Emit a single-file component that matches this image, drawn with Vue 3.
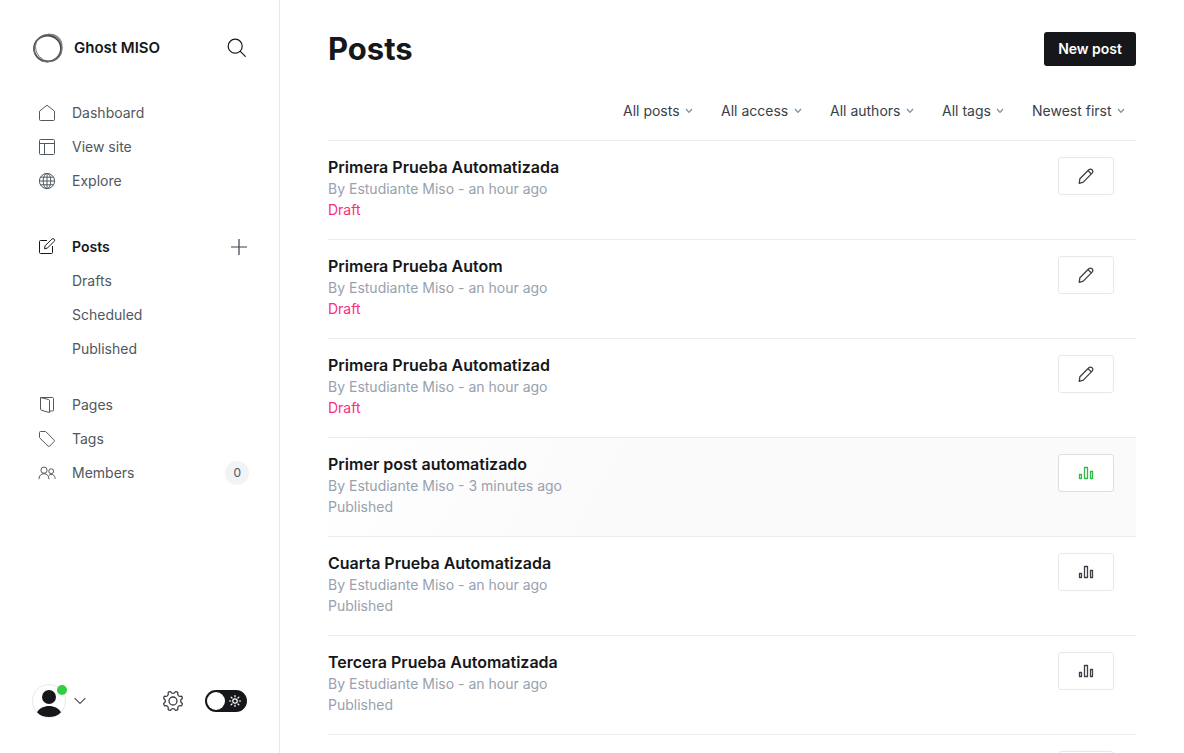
<script setup>
import { ref } from 'vue'

const mainLinks = [
  { label: 'Dashboard', icon: 'home' },
  { label: 'View site', icon: 'layout' },
  { label: 'Explore', icon: 'globe' },
]
const postLinks = ['Drafts', 'Scheduled', 'Published']
const contentLinks = [
  { label: 'Pages', icon: 'pages' },
  { label: 'Tags', icon: 'tag' },
  { label: 'Members', icon: 'members', count: 0 },
]
const filters = [
  { name: 'Type', value: 'All posts' },
  { name: 'Access', value: 'All access' },
  { name: 'Author', value: 'All authors' },
  { name: 'Tag', value: 'All tags' },
  { name: 'Order', value: 'Newest first' },
]
const posts = [
  { id: 1, title: 'Primera Prueba Automatizada', time: 'an hour ago', status: 'Draft' },
  { id: 2, title: 'Primera Prueba Autom', time: 'an hour ago', status: 'Draft' },
  { id: 3, title: 'Primera Prueba Automatizad', time: 'an hour ago', status: 'Draft' },
  { id: 4, title: 'Primer post automatizado', time: '3 minutes ago', status: 'Published', active: true },
  { id: 5, title: 'Cuarta Prueba Automatizada', time: 'an hour ago', status: 'Published' },
  { id: 6, title: 'Tercera Prueba Automatizada', time: 'an hour ago', status: 'Published' },
  { id: 7 },
]
const night = ref(false)

// Eight rounded teeth around a 22 x 22 box.
const point = (r, deg) => {
  const a = (deg * Math.PI) / 180
  return `${(11 + r * Math.cos(a)).toFixed(2)} ${(11 + r * Math.sin(a)).toFixed(2)}`
}
let gear = `M${point(9.6, 15.5)}`
for (let i = 0; i < 8; i++) {
  const a = 22.5 + i * 45
  gear += `Q${point(10.3, a)} ${point(9.6, a + 8)}`
  gear += `C${point(7.2, a + 12)} ${point(7.2, a + 33)} ${point(9.6, a + 37)}`
}
gear += 'Z'
</script>

<template>
  <div class="app">
    <aside class="sidebar">
      <header class="brand">
        <svg class="logo" viewBox="0 0 32 32" fill="none" aria-hidden="true">
          <path d="M12 3.500C19-.500 28 3 30 10C32.500 18 28 27 20 29.500C27 25 30 18 27.500 11.500C25 5 18 2.500 12 3.500Z" fill="#a8a8a8" />
          <ellipse cx="15.500" cy="16.500" rx="13.500" ry="13" stroke="#444" stroke-width="1.800" />
          <ellipse cx="16.500" cy="15.500" rx="14" ry="12.700" stroke="#666" stroke-width=".8" transform="rotate(48 16 16)" />
          <ellipse cx="16" cy="16" rx="14.700" ry="13.200" stroke="#777" stroke-width=".8" transform="rotate(-45 16 16)" />
        </svg>
        <strong>Ghost MISO</strong>
        <button class="icon-button search" type="button" aria-label="Search">
          <svg width="20" height="20" viewBox="0 0 20 20" fill="none" stroke="#15171a" stroke-width="1.200" stroke-linecap="round"><circle cx="8.200" cy="8.200" r="7" /><path d="m13.300 13.300 5 5" /></svg>
        </button>
      </header>

      <nav class="nav">
        <ul>
          <li v-for="link in mainLinks" :key="link.label">
            <a href="#">
              <svg class="nav-icon" viewBox="0 0 18 18" aria-hidden="true">
                <path v-if="link.icon === 'home'" d="M1.500 7.200 9 1.200l7.500 6V15.500a1 1 0 0 1-1 1h-13a1 1 0 0 1-1-1Z" />
                <path v-else-if="link.icon === 'layout'" d="M2.500 1.500h13a1 1 0 0 1 1 1v13a1 1 0 0 1-1 1h-13a1 1 0 0 1-1-1v-13a1 1 0 0 1 1-1ZM1.500 5.500h15M6.500 5.500v11" />
                <g v-else><circle cx="9" cy="9" r="7.600" /><ellipse cx="9" cy="9" rx="3.800" ry="7.600" /><path d="M9 1.400v15.200M1.400 9h15.200M2.500 5.200h13M2.500 12.800h13" /></g>
              </svg>
              {{ link.label }}
            </a>
          </li>
        </ul>
        <ul class="posts-nav">
          <li class="current">
            <a href="#" aria-current="page">
              <svg class="nav-icon" viewBox="0 0 18 18" aria-hidden="true">
                <path d="M9 2.500H2.500a1 1 0 0 0-1 1v11a1 1 0 0 0 1 1h11a1 1 0 0 0 1-1V8M6.500 10.800l.6-3 6.700-6.700a1.500 1.500 0 0 1 2.300 2.300L9.400 10.100Z" />
              </svg>
              Posts
            </a>
            <button class="icon-button add" type="button" aria-label="New post">
              <svg width="18" height="18" viewBox="0 0 18 18" fill="none" stroke="#394047" stroke-width="1.200"><path d="M9 1v16M1 9h16" /></svg>
            </button>
          </li>
          <li v-for="label in postLinks" :key="label"><a class="sub" href="#">{{ label }}</a></li>
        </ul>
        <ul>
          <li v-for="link in contentLinks" :key="link.label">
            <a href="#">
              <svg class="nav-icon" viewBox="0 0 18 18" aria-hidden="true">
                <path v-if="link.icon === 'pages'" d="M2.500 1.500h12a1 1 0 0 1 1 1v11.500a1 1 0 0 1-1 1h-3M2.500 1.500l8 2a1.300 1.300 0 0 1 1 1.200v11.800l-8-2.200a1.300 1.300 0 0 1-1-1.200Z" />
                <path v-else-if="link.icon === 'tag'" d="M2.500 1.500h4.600a1.500 1.500 0 0 1 1.100.5l7.800 7.900a1.200 1.200 0 0 1 0 1.700l-4.300 4.500a1.200 1.200 0 0 1-1.700 0L2 8.200A1.500 1.500 0 0 1 1.500 7V2.500a1 1 0 0 1 1-1Z" />
                <g v-else><circle cx="6" cy="6.200" r="3.100" /><circle cx="13.200" cy="7.200" r="2.400" /><path d="M.9 15.200c0-3.300 2.100-5.500 5.100-5.500s5 2.200 5 5.500M11 11.300c2.800-2 6.100-.4 6.100 3.500" /></g>
              </svg>
              {{ link.label }}
              <span v-if="link.count !== undefined" class="count">{{ link.count }}</span>
            </a>
          </li>
        </ul>
      </nav>

      <footer class="account">
        <button class="user" type="button" aria-label="Account menu">
          <span class="avatar">
            <svg width="34" height="34" viewBox="0 0 34 34" aria-hidden="true">
              <circle cx="17" cy="17" r="16.500" fill="#fff" stroke="#e6e9eb" />
              <circle cx="17" cy="13" r="7" fill="#15171a" />
              <path d="M5 28.200c2.500-4 7-6.200 12-6.200s9.500 2.200 12 6.200C26 31.500 21.500 33 17 33S8 31.500 5 28.200Z" fill="#15171a" />
            </svg>
            <span class="status-dot"></span>
          </span>
          <svg width="12" height="8" viewBox="0 0 12 8" fill="none" stroke="#505860" stroke-width="1.100" stroke-linecap="round"><path d="m1 1.500 5 5 5-5" /></svg>
        </button>
        <button class="icon-button settings" type="button" aria-label="Settings">
          <svg width="22" height="22" viewBox="0 0 22 22" fill="none" stroke="#394047" stroke-width="1.300" stroke-linejoin="round"><path :d="gear" /><circle cx="11" cy="11" r="4" /></svg>
        </button>
        <label class="toggle">
          <input v-model="night" type="checkbox" aria-label="Night shift" />
          <svg width="12" height="12" viewBox="0 0 12 12" fill="none" stroke="#fff" stroke-width="1.200" stroke-linecap="round"><circle cx="6" cy="6" r="2.200" /><path d="M6 .5v1.300M6 10.200v1.300M.5 6h1.300M10.200 6h1.300M2.100 2.100l.9.900M9 9l.9.900M9.900 2.100 9 3M3 9l-.9.900" /></svg>
        </label>
      </footer>
    </aside>

    <main class="main">
      <header class="page-header">
        <h1>Posts</h1>
        <button class="new-post" type="button">New post</button>
      </header>
      <div class="filters">
        <label v-for="filter in filters" :key="filter.name" class="filter">
          <select :aria-label="filter.name"><option>{{ filter.value }}</option></select>
          <svg width="8" height="6" viewBox="0 0 8 6" fill="none" stroke="#7c8b9a" stroke-width="1.200" aria-hidden="true"><path d="m1 1 3 3.300L7 1" /></svg>
        </label>
      </div>
      <ol class="posts">
        <li v-for="post in posts" :key="post.id" class="post" :class="{ active: post.active }">
          <div class="details">
            <template v-if="post.title">
              <h2>{{ post.title }}</h2>
              <p>By Estudiante Miso - {{ post.time }}</p>
              <p :class="{ draft: post.status === 'Draft' }">{{ post.status }}</p>
            </template>
          </div>
          <button class="action" type="button" :aria-label="post.status === 'Draft' ? 'Edit post' : 'Post analytics'">
            <svg v-if="post.status === 'Draft'" width="16" height="16" viewBox="0 0 16 16"><path d="M1.200 15.300 1.900 10.700 10.800 1.800a2.300 2.300 0 0 1 3.300 0 2.300 2.300 0 0 1 0 3.300L5.300 14.100ZM10 2.600l3.400 3.400" /></svg>
            <svg v-else width="16" height="16" viewBox="0 0 16 16"><path d="M1.500 9.500h2v4h-2ZM6.500 2.500h3v11h-3ZM12.500 6.500h2v7h-2Z" /></svg>
          </button>
        </li>
      </ol>
    </main>
  </div>
</template>

<style>
body {
  margin: 0;
  background: #fff;
}
</style>

<style scoped>
.app {
  display: flex;
  height: 100vh;
  color: #15171a;
  font-family: Inter, "Liberation Sans", sans-serif;
  font-size: 14px;
  line-height: 20px;
}
.app * {
  box-sizing: border-box;
}
button {
  padding: 0;
  border: 0;
  background: none;
  font: inherit;
  cursor: pointer;
}
svg {
  display: block;
  flex: none;
}
ul,
ol {
  margin: 0;
  padding: 0;
  list-style: none;
}
.sidebar {
  display: flex;
  flex: none;
  flex-direction: column;
  width: 280px;
  padding: 32px 32px 35px;
  border-right: 1px solid #e6e9eb;
}
.brand {
  display: flex;
  align-items: center;
  gap: 10px;
  height: 32px;
  font-size: 15px;
}
.brand strong {
  font-weight: 600;
}
.logo {
  width: 32px;
  height: 32px;
}
.search {
  margin-left: auto;
}
.nav {
  flex: 1;
  margin-top: 32px;
}
.nav ul {
  margin-bottom: 32px;
}
.nav .posts-nav {
  margin-bottom: 22px;
}
.nav li {
  display: flex;
  align-items: center;
}
.nav a {
  display: flex;
  flex: 1;
  align-items: center;
  gap: 16px;
  height: 34px;
  padding-left: 6px;
  color: #505860;
  text-decoration: none;
}
.nav a.sub {
  padding-left: 40px;
}
.nav .current a {
  color: #15171a;
  font-weight: 600;
}
.nav-icon {
  width: 18px;
  height: 18px;
  fill: none;
  stroke: #505860;
  stroke-linejoin: round;
}
.current .nav-icon {
  stroke: #15171a;
}
.add {
  margin-right: -1px;
}
.count {
  margin: 0 -2px 0 auto;
  padding: 2px 8px;
  border-radius: 12px;
  background: #f1f3f4;
  font-size: 12px;
}
.account {
  display: flex;
  align-items: center;
}
.user {
  display: flex;
  align-items: center;
  gap: 8px;
}
.avatar {
  position: relative;
}
.status-dot {
  position: absolute;
  top: 1px;
  right: -1px;
  width: 10px;
  height: 10px;
  border-radius: 50%;
  background: #30cf43;
}
.settings {
  margin-left: auto;
}
.toggle {
  position: relative;
  margin-left: 21px;
}
.toggle input {
  display: block;
  width: 42px;
  height: 22px;
  margin: 0;
  border: 2px solid #15171a;
  border-radius: 11px;
  background: #15171a;
  appearance: none;
}
.toggle input::before {
  display: block;
  width: 18px;
  height: 18px;
  border-radius: 50%;
  background: #fff;
  content: "";
}
.toggle svg {
  position: absolute;
  top: 5px;
  right: 6px;
}
.main {
  flex: 1;
  min-width: 0;
  padding: 32px 48px;
  overflow-y: auto;
  scrollbar-width: none;
}
.page-header {
  display: flex;
  align-items: center;
  justify-content: space-between;
  height: 34px;
}
h1 {
  margin: 0;
  font-size: 31px;
  font-weight: 700;
  line-height: 34px;
}
.new-post {
  height: 34px;
  padding: 0 14px;
  border-radius: 3px;
  background: #15171a;
  color: #fff;
  font-weight: 600;
}
.filters {
  display: flex;
  justify-content: flex-end;
  gap: 28px;
  margin-top: 34px;
  padding-right: 11px;
}
.filter {
  display: flex;
  align-items: center;
  gap: 5px;
}
.filter select {
  height: 22px;
  padding: 0;
  border: 0;
  background: none;
  color: #394047;
  font: inherit;
  appearance: none;
}
.posts {
  margin-top: 18px;
  border-top: 1px solid #e9ebed;
}
.post {
  display: flex;
  align-items: flex-start;
  justify-content: space-between;
  padding: 16px 22px 19px 0;
  border-bottom: 1px solid #e9ebed;
}
.post.active {
  background: linear-gradient(120deg, #fff, #fafafa 35%);
}
h2,
p {
  margin: 0;
}
h2 {
  margin-bottom: 1px;
  font-size: 16px;
  font-weight: 600;
  line-height: 20px;
}
p {
  color: #98a1ad;
  line-height: 21px;
}
p.draft {
  color: #fb2d7d;
}
.action {
  display: grid;
  place-items: center;
  width: 56px;
  height: 38px;
  border: 1px solid #e6e9eb;
  border-radius: 3px;
  background: #fff;
}
.action svg {
  fill: none;
  stroke: #394047;
  stroke-width: 1.3;
  stroke-linejoin: round;
}
.active .action {
  border-color: #dddee0;
}
.active .action svg {
  stroke: #30b84a;
}
</style>
